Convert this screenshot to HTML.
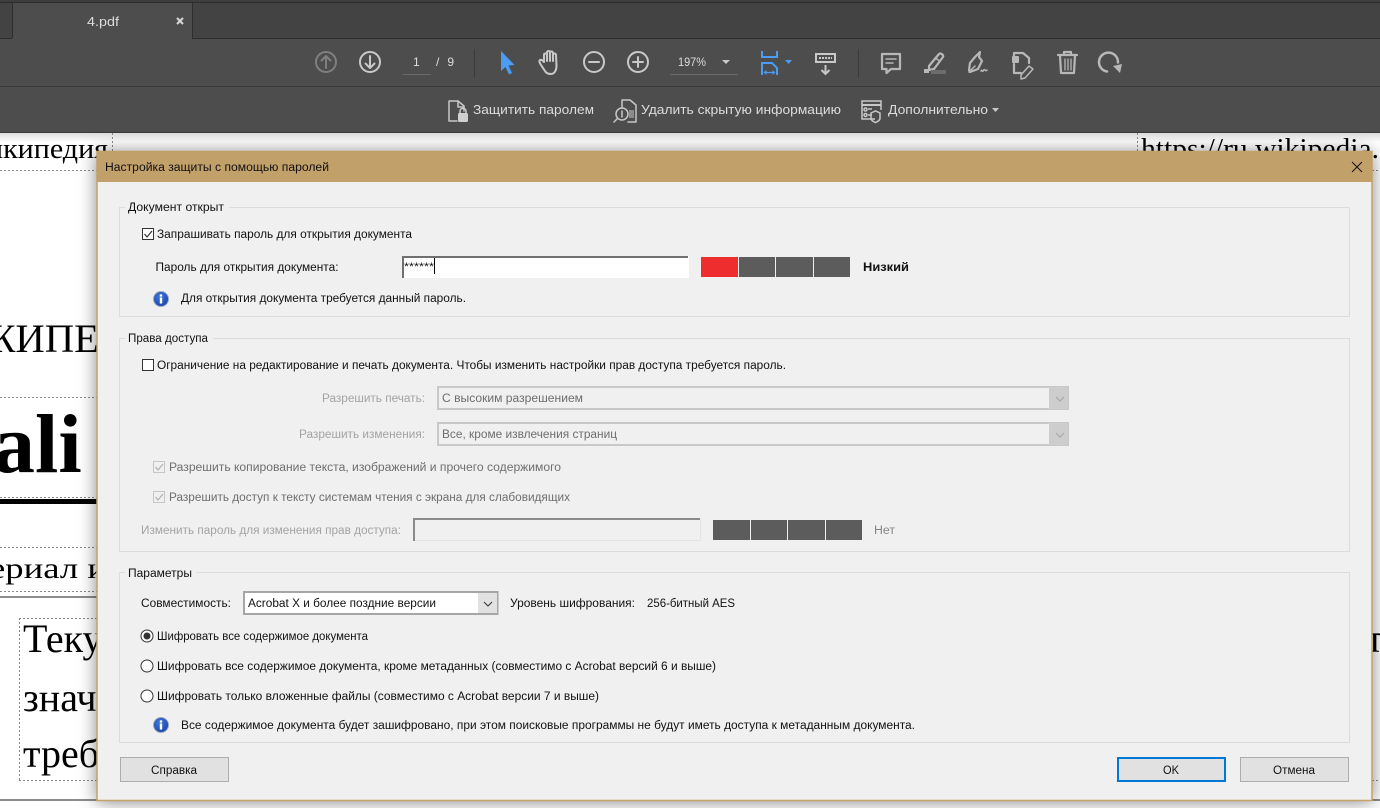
<!DOCTYPE html>
<html lang="ru">
<head>
<meta charset="utf-8">
<title>Настройка защиты с помощью паролей</title>
<style>
html,body{margin:0;padding:0;background:#fff;width:1380px;height:808px;overflow:hidden}
svg{display:block}
text{font-family:"Liberation Sans","DejaVu Sans",sans-serif;font-size:11.5px;fill:#111}
.s{font-family:"Liberation Serif","DejaVu Serif",serif;fill:#000}
.tb{font-size:13px;fill:#dcdcdc}
.dis{fill:#a3a3a3}
.dis2{fill:#6e6e6e}
.ic{fill:none;stroke:#c8c8c8;stroke-width:2;stroke-linecap:round;stroke-linejoin:round}
.ig{fill:none;stroke:#b8b8b8;stroke-width:2.2;stroke-linecap:round;stroke-linejoin:round}
.dash{stroke:#8a8a8a;stroke-width:1;stroke-dasharray:2 2;fill:none}
</style>
</head>
<body>
<svg xmlns="http://www.w3.org/2000/svg" width="1380" height="808" viewBox="0 0 1380 808">
<defs>
<linearGradient id="sh" x1="0" y1="0" x2="0" y2="1"><stop offset="0" stop-color="#000" stop-opacity=".14"/><stop offset="1" stop-color="#000" stop-opacity="0"/></linearGradient>
<radialGradient id="inf" cx=".4" cy=".35" r=".75"><stop offset="0" stop-color="#3f78d8"/><stop offset="1" stop-color="#1a3fa6"/></radialGradient>
<g id="info"><circle r="7.5" fill="url(#inf)" stroke="#9aa7c4" stroke-width="1"/><rect x="-1.2" y="-1.5" width="2.4" height="6" fill="#fff"/><rect x="-1.2" y="-4.6" width="2.4" height="2.2" fill="#fff"/></g>
</defs>

<!-- PDF page background -->
<rect x="0" y="133" width="1380" height="675" fill="#fff"/>
<rect x="0" y="133" width="1380" height="9" fill="url(#sh)"/>
<text class="s" x="-13" y="158" style="font-size:28px" textLength="121" lengthAdjust="spacingAndGlyphs">икипедия</text>
<path class="dash" d="M0 170.5H112M112.500 133V170M0 397.500H97M0 497.500H97M0 547.500H97M0 591.500H97M19.500 618V780M19 618.500H97M19 780.500H97M1137.500 133V152M1372 170.500H1380M1372 780.500H1380"/>
<text class="s" x="-21" y="352" style="font-size:40px" textLength="120" lengthAdjust="spacingAndGlyphs">ЖИПЕ</text>
<text class="s" x="-7" y="472" style="font-size:84px;font-weight:bold">ali</text>
<rect x="0" y="499" width="97" height="5" fill="#000"/>
<text class="s" x="-11" y="578" style="font-size:30px" textLength="118" lengthAdjust="spacingAndGlyphs">ериал и</text>
<rect x="0" y="596" width="97" height="2" fill="#8c8c8c"/>
<rect x="0" y="799" width="1380" height="2" fill="#8c8c8c"/>
<text class="s" x="23" y="652" style="font-size:40px">Теку</text>
<text class="s" x="23" y="711" style="font-size:40px">знач</text>
<text class="s" x="23" y="767" style="font-size:40px">треб</text>
<text class="s" x="1366" y="652" style="font-size:40px">т</text>
<text class="s" x="1141" y="158" style="font-size:28px" textLength="238" lengthAdjust="spacingAndGlyphs">https://ru.wikipedia.</text>

<!-- Chrome -->
<rect x="0" y="0" width="1380" height="133" fill="#4d4d4d"/>
<rect x="0" y="0" width="1380" height="3" fill="#3e3e3e"/>
<rect x="0" y="2" width="1380" height="1" fill="#2c2c2c"/>
<rect x="0" y="3" width="1380" height="36" fill="#434343"/>
<rect x="0" y="38" width="1380" height="1" fill="#2e2e2e"/>
<rect x="12" y="3" width="180" height="36" fill="#4d4d4d"/>
<path d="M12.500 3V38M192.500 3V38" stroke="#2e2e2e" stroke-width="1"/>
<rect x="12" y="38" width="180" height="1" fill="#4d4d4d"/>
<text class="tb" x="87" y="26" style="font-size:13px" textLength="32" lengthAdjust="spacingAndGlyphs">4.pdf</text>
<path d="M177 18l6 6M183 18l-6 6" stroke="#d8d8d8" stroke-width="2"/>
<rect x="0" y="86" width="1380" height="1" fill="#3a3a3a"/>
<rect x="0" y="132" width="1380" height="1" fill="#3a3a3a"/>

<!-- toolbar row 1 -->
<g class="ic" style="stroke:#7f7f7f"><circle cx="326" cy="62" r="10"/><path d="M326 68V56M321.500 60.500L326 56l4.500 4.500"/></g>
<g class="ic"><circle cx="370" cy="62" r="10"/><path d="M370 56V68M365.500 63.500L370 68l4.500-4.500"/></g>
<text class="tb" x="413" y="66" style="font-size:12px">1</text>
<rect x="403" y="74" width="28" height="1" fill="#6a6a6a"/>
<text class="tb" x="436" y="66" style="font-size:12px" textLength="18" lengthAdjust="spacing">/ 9</text>
<rect x="474" y="49" width="1" height="28" fill="#3a3a3a"/>
<path d="M501 51V71L505.500 67L509 74.500L512 73L508.500 65.500L514.500 65Z" fill="#4a9df2"/>
<path class="ic" d="M545 71c-2-3-5-7-5.500-9-.5-2 1.500-3 3-1.500L544 62V55c0-2 2.500-2 3 0v6M547 61V52.500c0-2 3-2 3 0V61M550 61V53c0-2 3-2 3 0v8M553 61V55c0-2 3-2 3 0l.5 11c0 4-2 8-5.500 8-3 0-5-1-6-3"/>
<g class="ic"><circle cx="594" cy="62" r="10"/><path d="M589 62h10"/></g>
<g class="ic"><circle cx="638" cy="62" r="10"/><path d="M633 62h10M638 57v10"/></g>
<text class="tb" x="678" y="66" style="font-size:12px" textLength="28" lengthAdjust="spacingAndGlyphs">197%</text>
<polygon points="722,60 730,60 726,64" fill="#c8c8c8"/>
<rect x="670" y="74" width="68" height="1" fill="#6a6a6a"/>
<g fill="none" stroke="#4a9df2" stroke-width="2"><path d="M762 51v6h15v-6M762 75V63h10l5 5v7"/></g>
<path d="M765 72.500h9" stroke="#4a9df2" stroke-width="1.200"/>
<polygon points="763.500,72.500 766.500,70 766.500,75" fill="#4a9df2"/><polygon points="775.500,72.500 772.500,70 772.500,75" fill="#4a9df2"/>
<polygon points="785,60 792,60 788.500,64" fill="#4a9df2"/>
<g fill="none" stroke="#c8c8c8" stroke-width="2"><rect x="816" y="54" width="19" height="8"/><path d="M825.500 65v9M821.500 70l4 4 4-4"/></g>
<path d="M819 58h13" stroke="#c8c8c8" stroke-width="2" stroke-dasharray="2 1"/>
<rect x="858" y="49" width="1" height="28" fill="#3a3a3a"/>
<g class="ig"><path d="M882 54h18v15h-9l-4.500 4v-4H882Z"/><path d="M886 59h10M886 63h7" stroke-width="1.500"/></g>
<g class="ig"><path d="M929 66l10-12c1.500-1.500 5 1 4 3l-9 12-5 1Z"/><path d="M935 58l5 3" stroke-width="1.500"/></g>
<rect x="924" y="69" width="5" height="4" fill="#b8b8b8"/><rect x="931" y="70" width="15" height="4" fill="#6c6c6c"/>
<g class="ig"><path d="M980 52l-1 5 3 4-4 8-8 3-1-2 1-7 5-6Z"/><path d="M969 72l6-6M981 71c1-2 1 1 2 0s1-2 2-1 1 1 2 0" stroke-width="1.500"/></g>
<g class="ig"><path d="M1014 56v-3h9l6 5v5M1014 64v9h7"/><path d="M1029 66l4 3-8 9-4 1 0-4Z" stroke-width="1.500"/></g>
<rect x="1012" y="56" width="7" height="7" rx="1" fill="#b8b8b8"/>
<g class="ig"><path d="M1058 55h19M1064 55v-3h7v3M1060 55l1 18h13l1-18"/><path d="M1065 59v11M1068 59v11M1071 59v11" stroke-width="1.300"/></g>
<path class="ig" d="M1107 71.500a9.500 9.500 0 1 1 11-9" style="stroke-width:2.500"/>
<polygon points="1113,66 1122,64 1120,73" fill="#b8b8b8"/>

<!-- toolbar row 2 -->
<g class="ic" style="stroke-width:1.500"><path d="M457 121h-8v-20h9l6 5v5"/><path d="M458 101v6h6"/></g>
<rect x="458" y="113" width="10" height="9" rx="1.500" fill="#d0d0d0"/>
<path d="M460 113v-2c0-3.500 6-3.500 6 0v2" fill="none" stroke="#d0d0d0" stroke-width="1.500"/>
<text class="tb" x="473" y="114" textLength="121" lengthAdjust="spacingAndGlyphs">Защитить паролем</text>
<g class="ic" style="stroke-width:1.500"><path d="M622 108v-8h8l6 5v17h-8"/><circle cx="622" cy="114" r="6"/><path d="M617 119l-3 3M622 111v6"/></g>
<rect x="629" y="110" width="5" height="8" fill="#8c8c8c"/>
<text class="tb" x="641" y="114" textLength="200" lengthAdjust="spacingAndGlyphs">Удалить скрытую информацию</text>
<g fill="none" stroke="#c8c8c8" stroke-width="1.500"><path d="M875 119h-13v-18h19v9"/><path d="M862 105h19" stroke-width="2"/><path d="M868 109h4M868 115h4"/><circle cx="865.500" cy="109.500" r="1.500"/><circle cx="865.500" cy="115" r="1.500"/><path d="M871 113l4.500-2 4.500 2v5c0 2.500-2 3.500-4.500 4.500-2.500-1-4.500-2-4.500-4.500Z"/></g>
<text class="tb" x="888" y="114" textLength="100" lengthAdjust="spacingAndGlyphs">Дополнительно</text>
<polygon points="992,108 999,108 995.500,112" fill="#c8c8c8"/>

<!-- Dialog -->
<rect x="97" y="151.500" width="1275" height="649" fill="#f0f0f0" style="filter:drop-shadow(0 1px 9px rgba(0,0,0,.5))"/>
<rect x="97" y="151.500" width="1275" height="649" fill="#f0f0f0" stroke="#c5a16b" stroke-width="1.500"/>
<rect x="97" y="151" width="1275" height="31" fill="#c2a06a"/>
<text x="105" y="171" textLength="224" lengthAdjust="spacingAndGlyphs">Настройка защиты с помощью паролей</text>
<path d="M1352 162l10 10M1362 162l-10 10" stroke="#111" stroke-width="1"/>

<!-- Group 1 -->
<rect x="119.500" y="207.500" width="1230" height="109" fill="none" stroke="#dcdcdc"/>
<rect x="125" y="203" width="104" height="9" fill="#f0f0f0"/>
<text x="128" y="211" textLength="96" lengthAdjust="spacingAndGlyphs">Документ открыт</text>
<rect x="142.500" y="228.500" width="11" height="11" fill="#fff" stroke="#333"/>
<path d="M144.500 234l2.500 3 5-6" fill="none" stroke="#333" stroke-width="1.200"/>
<text x="157" y="238" textLength="255" lengthAdjust="spacingAndGlyphs">Запрашивать пароль для открытия документа</text>
<text x="155.500" y="271" textLength="183" lengthAdjust="spacingAndGlyphs">Пароль для открытия документа:</text>
<rect x="402" y="256" width="287" height="22" fill="#fff"/>
<path d="M403 278V257H688" fill="none" stroke="#707070" stroke-width="2"/>
<text x="404" y="270" textLength="30" lengthAdjust="spacingAndGlyphs" style="font-size:11px">******</text>
<rect x="434" y="258" width="1" height="16" fill="#000"/>
<rect x="701" y="257" width="37" height="20" fill="#ee2e2e"/>
<rect x="739" y="257" width="36" height="20" fill="#5c5c5c"/>
<rect x="776" y="257" width="37" height="20" fill="#5c5c5c"/>
<rect x="814" y="257" width="36" height="20" fill="#5c5c5c"/>
<text x="863" y="271" style="font-weight:bold" textLength="46" lengthAdjust="spacingAndGlyphs">Низкий</text>
<use href="#info" x="161" y="299"/>
<text x="181" y="302" textLength="285" lengthAdjust="spacingAndGlyphs">Для открытия документа требуется данный пароль.</text>

<!-- Group 2 -->
<rect x="119.500" y="338.500" width="1230" height="213" fill="none" stroke="#dcdcdc"/>
<rect x="125" y="334" width="88" height="9" fill="#f0f0f0"/>
<text x="128" y="342" textLength="80" lengthAdjust="spacingAndGlyphs">Права доступа</text>
<rect x="142.500" y="359.500" width="11" height="11" fill="#fff" stroke="#333"/>
<text x="157" y="369" textLength="629" lengthAdjust="spacingAndGlyphs">Ограничение на редактирование и печать документа. Чтобы изменить настройки прав доступа требуется пароль.</text>
<text class="dis" x="322" y="402" textLength="103" lengthAdjust="spacingAndGlyphs">Разрешить печать:</text>
<rect x="438" y="387" width="630" height="22" fill="#f0f0f0" stroke="#c8c8c8" stroke-width="2"/>
<rect x="1049" y="387" width="19" height="22" fill="#cdcdcd"/>
<path d="M1056 397l4 4 4-4" fill="none" stroke="#a8a8a8" stroke-width="1.200"/>
<text class="dis2" x="442" y="402" textLength="141" lengthAdjust="spacingAndGlyphs">С высоким разрешением</text>
<text class="dis" x="299" y="438" textLength="126" lengthAdjust="spacingAndGlyphs">Разрешить изменения:</text>
<rect x="438" y="423" width="630" height="22" fill="#f0f0f0" stroke="#c8c8c8" stroke-width="2"/>
<rect x="1049" y="423" width="19" height="22" fill="#cdcdcd"/>
<path d="M1056 433l4 4 4-4" fill="none" stroke="#a8a8a8" stroke-width="1.200"/>
<text class="dis2" x="442" y="438" textLength="175" lengthAdjust="spacingAndGlyphs">Все, кроме извлечения страниц</text>
<rect x="153.500" y="461.500" width="11" height="11" fill="#f0f0f0" stroke="#c6c6c6"/>
<path d="M155.500 467l2.500 3 5-6" fill="none" stroke="#b0b0b0" stroke-width="1.200"/>
<text class="dis2" x="169" y="471" textLength="392" lengthAdjust="spacingAndGlyphs">Разрешить копирование текста, изображений и прочего содержимого</text>
<rect x="153.500" y="491.500" width="11" height="11" fill="#f0f0f0" stroke="#c6c6c6"/>
<path d="M155.500 497l2.500 3 5-6" fill="none" stroke="#b0b0b0" stroke-width="1.200"/>
<text class="dis2" x="169" y="501" textLength="401" lengthAdjust="spacingAndGlyphs">Разрешить доступ к тексту системам чтения с экрана для слабовидящих</text>
<text class="dis" x="141" y="534" textLength="260" lengthAdjust="spacingAndGlyphs">Изменить пароль для изменения прав доступа:</text>
<rect x="413" y="518" width="287" height="23" fill="#f0f0f0"/>
<path d="M414 541V519H700" fill="none" stroke="#8a8a8a" stroke-width="2"/>
<path d="M415 540.500H700.500V519" fill="none" stroke="#e4e4e4"/>
<rect x="713" y="520" width="37" height="20" fill="#5c5c5c"/>
<rect x="751" y="520" width="36" height="20" fill="#5c5c5c"/>
<rect x="788" y="520" width="37" height="20" fill="#5c5c5c"/>
<rect x="826" y="520" width="36" height="20" fill="#5c5c5c"/>
<text x="874" y="534" style="fill:#858585" textLength="21" lengthAdjust="spacingAndGlyphs">Нет</text>

<!-- Group 3 -->
<rect x="119.500" y="572.500" width="1230" height="170" fill="none" stroke="#dcdcdc"/>
<rect x="125" y="568" width="71" height="9" fill="#f0f0f0"/>
<text x="128" y="577" textLength="64" lengthAdjust="spacingAndGlyphs">Параметры</text>
<text x="141" y="607" textLength="90" lengthAdjust="spacingAndGlyphs">Совместимость:</text>
<rect x="244" y="592" width="253.500" height="22" fill="#fff" stroke="#a6a6a6" stroke-width="2"/>
<rect x="478" y="593" width="19" height="20" fill="#e1e1e1"/>
<path d="M484 602l4 4 4-4" fill="none" stroke="#333" stroke-width="1"/>
<text x="248" y="607" textLength="188" lengthAdjust="spacingAndGlyphs">Acrobat X и более поздние версии</text>
<text x="510" y="607" textLength="125" lengthAdjust="spacingAndGlyphs">Уровень шифрования:</text>
<text x="647" y="607" textLength="88" lengthAdjust="spacingAndGlyphs">256-битный AES</text>
<circle cx="147" cy="636" r="6" fill="#fff" stroke="#333"/><circle cx="147" cy="636" r="3.500" fill="#333"/>
<text x="157" y="640" textLength="211" lengthAdjust="spacingAndGlyphs">Шифровать все содержимое документа</text>
<circle cx="147" cy="666" r="6" fill="#fff" stroke="#333"/>
<text x="157" y="670" textLength="559" lengthAdjust="spacingAndGlyphs">Шифровать все содержимое документа, кроме метаданных (совместимо с Acrobat версий 6 и выше)</text>
<circle cx="147" cy="696" r="6" fill="#fff" stroke="#333"/>
<text x="157" y="700" textLength="442" lengthAdjust="spacingAndGlyphs">Шифровать только вложенные файлы (совместимо с Acrobat версии 7 и выше)</text>
<use href="#info" x="161" y="725"/>
<text x="181" y="729" textLength="734" lengthAdjust="spacingAndGlyphs">Все содержимое документа будет зашифровано, при этом поисковые программы не будут иметь доступа к метаданным документа.</text>

<!-- Buttons -->
<rect x="120.500" y="757.500" width="108" height="24" fill="#e1e1e1" stroke="#adadad"/>
<text x="151" y="774" textLength="46" lengthAdjust="spacingAndGlyphs">Справка</text>
<rect x="1118" y="758" width="107" height="23" fill="#e1e1e1" stroke="#0078d7" stroke-width="2"/>
<text x="1163" y="774" textLength="16" lengthAdjust="spacingAndGlyphs">OK</text>
<rect x="1240.500" y="757.500" width="108" height="24" fill="#e1e1e1" stroke="#adadad"/>
<text x="1273" y="774" textLength="42" lengthAdjust="spacingAndGlyphs">Отмена</text>
</svg>
</body>
</html>
